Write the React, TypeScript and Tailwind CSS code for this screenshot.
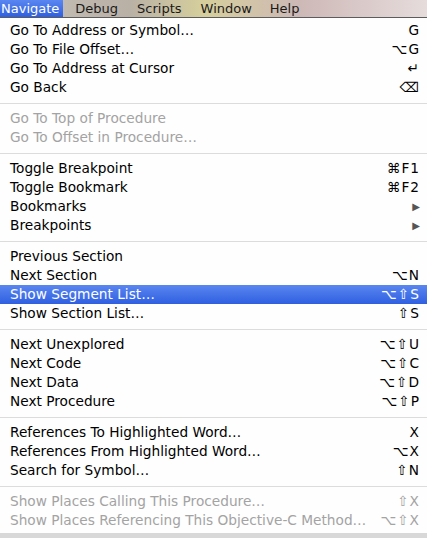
import { ReactNode } from 'react'

type Item = {
  label: string
  shortcut?: ReactNode
  disabled?: boolean
  active?: boolean
  submenu?: boolean
}

const groups: Item[][] = [
  [
    { label: 'Go To Address or Symbol…', shortcut: 'G' },
    { label: 'Go To File Offset…', shortcut: '⌥G' },
    { label: 'Go To Address at Cursor', shortcut: '↵' },
    { label: 'Go Back', shortcut: '⌫' },
  ],
  [
    { label: 'Go To Top of Procedure', disabled: true },
    { label: 'Go To Offset in Procedure…', disabled: true },
  ],
  [
    { label: 'Toggle Breakpoint', shortcut: '⌘F1' },
    { label: 'Toggle Bookmark', shortcut: '⌘F2' },
    { label: 'Bookmarks', submenu: true },
    { label: 'Breakpoints', submenu: true },
  ],
  [
    { label: 'Previous Section' },
    { label: 'Next Section', shortcut: '⌥N' },
    { label: 'Show Segment List…', shortcut: '⌥⇧S', active: true },
    { label: 'Show Section List…', shortcut: '⇧S' },
  ],
  [
    { label: 'Next Unexplored', shortcut: '⌥⇧U' },
    { label: 'Next Code', shortcut: '⌥⇧C' },
    { label: 'Next Data', shortcut: '⌥⇧D' },
    { label: 'Next Procedure', shortcut: '⌥⇧P' },
  ],
  [
    { label: 'References To Highlighted Word…', shortcut: 'X' },
    { label: 'References From Highlighted Word…', shortcut: '⌥X' },
    { label: 'Search for Symbol…', shortcut: '⇧N' },
  ],
  [
    { label: 'Show Places Calling This Procedure…', shortcut: '⇧X', disabled: true },
    { label: 'Show Places Referencing This Objective-C Method…', shortcut: '⌥⇧X', disabled: true },
  ],
]

function Row({ item }: { item: Item }) {
  const color = item.active
    ? 'bg-gradient-to-b from-[#5a86f0] to-[#2f5fe0] text-white'
    : item.disabled
      ? 'text-[#a3a3a3]'
      : 'text-black'
  return (
    <div className={`flex h-[19px] items-center justify-between pl-[10px] pr-[7px] ${color}`}>
      <span>{item.label}</span>
      {item.submenu ? (
        <span className="text-[10px] text-[#555]">▶</span>
      ) : (
        <span className="tracking-[1px]">{item.shortcut}</span>
      )}
    </div>
  )
}

export default function App() {
  return (
    <div className="h-[538px] w-[427px] overflow-hidden bg-[#d8d8d8] font-['DejaVu_Sans',sans-serif] text-[13.7px] leading-none">
      {/* menu bar */}
      <div className="flex h-[18px] items-center border-b border-[#5c5c5c] bg-[linear-gradient(90deg,#c9c4bd_0%,#b9b0a6_30%,#d6cf9c_48%,#cdb8b6_70%,#e6dcdc_100%)] text-[13px] text-[#1a1a1a]">
        <div className="flex h-full items-center bg-gradient-to-b from-[#5a86f0] to-[#2f5fe0] pl-[1px] pr-[4px] text-white">Navigate</div>
        <div className="ml-[12px]">Debug</div>
        <div className="ml-[19px]">Scripts</div>
        <div className="ml-[19px]">Window</div>
        <div className="ml-[18px]">Help</div>
      </div>

      {/* dropdown */}
      <div className="bg-white/[0.97] pt-[3px] pb-[3px]">
        {groups.map((group, gi) => (
          <div key={gi}>
            {gi > 0 && (
              <div className="flex h-[12px] items-center">
                <div className="h-px w-full bg-[#dcdcdc]" />
              </div>
            )}
            {group.map((item) => (
              <Row key={item.label} item={item} />
            ))}
          </div>
        ))}
      </div>
    </div>
  )
}
